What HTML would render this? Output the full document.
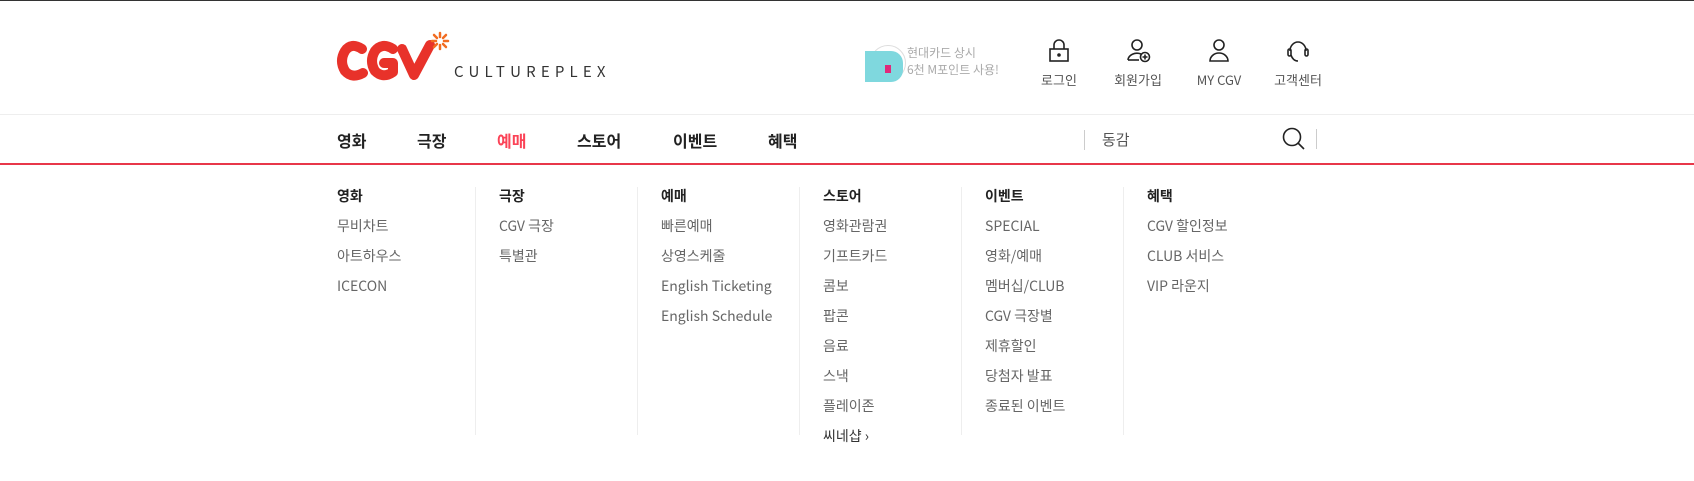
<!DOCTYPE html>
<html><head><meta charset="utf-8"><style>
*{margin:0;padding:0;box-sizing:border-box}
body{width:1694px;height:481px;background:#fff;font-family:"Noto Sans CJK KR","Liberation Sans",sans-serif;position:relative;overflow:hidden;border-top:1px solid #333}
.a{position:absolute;white-space:nowrap}
.nav{font-size:16px;color:#222;font-weight:bold;top:128px;line-height:22px}
.h{font-size:14px;font-weight:bold;color:#222}
.i{font-size:14px;color:#666}
.sep{position:absolute;top:186px;height:248px;width:1px;background:#eee}
.lab{font-size:13px;color:#555;top:70px;line-height:18px;transform:translateX(-50%)}
</style></head><body>
<svg class="a" style="left:336px;top:28px" width="120" height="60" viewBox="0 0 120 60">
<g fill="none" stroke="#e8322a" stroke-width="10" stroke-linecap="round" stroke-linejoin="round">
<path d="M26 20 Q15 13 9 22 Q3 32 9 42 Q16 50 27 44"/>
<path d="M57 20 Q46 13 39 22 Q33 32 39 42 Q47 50 57 43 L57 34 L48 34"/>
<path d="M66 20 L78 46 L94 16"/>
</g>
<g stroke="#f26c21" stroke-width="2.5" stroke-linecap="round"><path d="M104 4 L104 8 M104 16 L104 20 M96 12 L100 12 M108 12 L112 12 M98 6 L101 9 M107 15 L110 18 M110 6 L107 9 M101 15 L98 18"/></g>
</svg>
<div class="a" style="left:454px;top:62px;font-size:15px;letter-spacing:5.2px;color:#333;line-height:18px">CULTUREPLEX</div>
<div class="a" style="left:870px;top:44px;width:36px;height:36px;border-radius:50%;border:1px solid #ddd"></div>
<div class="a" style="left:865px;top:50px;width:38px;height:31px;background:#7fd8de;border-radius:0 12px 12px 0"></div>
<div class="a" style="left:885px;top:64px;width:6px;height:8px;background:#e0297a"></div>
<div class="a" style="left:907px;top:43px;font-size:12px;color:#aaa;line-height:17px">현대카드 상시<br>6천 M포인트 사용!</div>
<svg class="a" style="left:1048px;top:38px" width="22" height="24" viewBox="0 0 22 24" fill="none" stroke="#222" stroke-width="1.6"><rect x="2" y="10" width="18" height="12"/><path d="M6 10V6a5 5 0 0 1 10 0v4"/><circle cx="11" cy="16" r="1" fill="#222"/></svg>
<svg class="a" style="left:1127px;top:38px" width="24" height="24" viewBox="0 0 24 24" fill="none" stroke="#222" stroke-width="1.6"><circle cx="10" cy="6" r="5"/><path d="M1 21a9 7 0 0 1 13-6"/><path d="M1 21h11"/><circle cx="18" cy="18" r="4.5"/><path d="M18 15.5v5M15.5 18h5"/></svg>
<svg class="a" style="left:1208px;top:38px" width="22" height="24" viewBox="0 0 22 24" fill="none" stroke="#222" stroke-width="1.6"><circle cx="11" cy="6" r="5"/><path d="M2 22a9 8 0 0 1 18 0z"/></svg>
<svg class="a" style="left:1286px;top:38px" width="24" height="24" viewBox="0 0 24 24" fill="none" stroke="#222" stroke-width="1.6"><path d="M4 12a8 9 0 0 1 16 0"/><rect x="2" y="10" width="3" height="7" rx="1.5"/><rect x="19" y="10" width="3" height="7" rx="1.5"/><path d="M5 16q2 6 7 6"/></svg>
<div class="a lab" style="left:1059px">로그인</div>
<div class="a lab" style="left:1138px">회원가입</div>
<div class="a lab" style="left:1219px">MY CGV</div>
<div class="a lab" style="left:1298px">고객센터</div>
<div class="a" style="left:0;top:113px;width:1694px;height:1px;background:#eee"></div>
<div class="a" style="left:0;top:162px;width:1694px;height:2px;background:#e8374a"></div>
<div class="a nav" style="left:337px">영화</div>
<div class="a nav" style="left:417px">극장</div>
<div class="a nav" style="left:497px;color:#fb4357">예매</div>
<div class="a nav" style="left:577px">스토어</div>
<div class="a nav" style="left:673px">이벤트</div>
<div class="a nav" style="left:768px">혜택</div>
<div class="a" style="left:1084px;top:129px;width:1px;height:20px;background:#ccc"></div>
<div class="a" style="left:1102px;top:129px;font-size:15px;color:#555;line-height:20px">동감</div>
<svg class="a" style="left:1282px;top:126px" width="24" height="24" viewBox="0 0 24 24" fill="none" stroke="#222" stroke-width="1.6"><circle cx="10" cy="10" r="8.5"/><path d="M16 16l6 6"/></svg>
<div class="a" style="left:1316px;top:128px;width:1px;height:20px;background:#ccc"></div>
<div class="sep" style="left:475px"></div><div class="sep" style="left:637px"></div><div class="sep" style="left:799px"></div><div class="sep" style="left:961px"></div><div class="sep" style="left:1123px"></div>
<div class="a" style="left:337px;top:180px;line-height:30px"><div class="h">영화</div><div class="i">무비차트<br>아트하우스<br>ICECON</div></div>
<div class="a" style="left:499px;top:180px;line-height:30px"><div class="h">극장</div><div class="i">CGV 극장<br>특별관</div></div>
<div class="a" style="left:661px;top:180px;line-height:30px"><div class="h">예매</div><div class="i">빠른예매<br>상영스케줄<br>English Ticketing<br>English Schedule</div></div>
<div class="a" style="left:823px;top:180px;line-height:30px"><div class="h">스토어</div><div class="i">영화관람권<br>기프트카드<br>콤보<br>팝콘<br>음료<br>스낵<br>플레이존<br><span style="color:#333">씨네샵 ›</span></div></div>
<div class="a" style="left:985px;top:180px;line-height:30px"><div class="h">이벤트</div><div class="i">SPECIAL<br>영화/예매<br>멤버십/CLUB<br>CGV 극장별<br>제휴할인<br>당첨자 발표<br>종료된 이벤트</div></div>
<div class="a" style="left:1147px;top:180px;line-height:30px"><div class="h">혜택</div><div class="i">CGV 할인정보<br>CLUB 서비스<br>VIP 라운지</div></div>
</body></html>
